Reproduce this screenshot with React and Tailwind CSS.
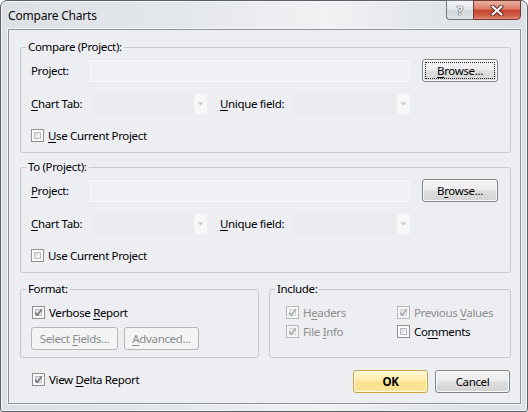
import React from "react";

const FONT = "font-['Noto_Sans','Liberation_Sans',sans-serif]";

function U({ children }) {
  return <span className="underline decoration-1 underline-offset-[2px]">{children}</span>;
}

function Check({ checked, disabled }) {
  return (
    <div
      className={`relative w-[13px] h-[13px] shrink-0 border p-[2px] ${
        disabled ? "border-[#b5b8bb] bg-[#f6f6f6]" : "border-[#8e8f8f] bg-[#fcfcfc]"
      }`}
    >
      <div
        className={`w-full h-full border ${
          disabled
            ? "border-[#d4d6d8] bg-[linear-gradient(135deg,#e4e5e7,#f7f7f7)]"
            : "border-[#b8bcc2] bg-[linear-gradient(135deg,#d6dadf,#f8f9fa)]"
        }`}
      />
      {checked && (
        <svg className="absolute left-[-1px] top-[-1px]" width="13" height="13" viewBox="0 0 13 13">
          <path
            d="M3.2 6.6 L5.4 9.2 L9.8 3.2"
            fill="none"
            stroke={disabled ? "#a9abad" : "#75797d"}
            strokeWidth="1.7"
          />
        </svg>
      )}
    </div>
  );
}

function CheckRow({ checked, disabled, children }) {
  return (
    <div className="flex items-center h-[13px]">
      <Check checked={checked} disabled={disabled} />
      <span className={`ml-[4px] leading-[16px] whitespace-nowrap ${disabled ? "text-[#8d8d8d]" : "text-black"}`}>
        {children}
      </span>
    </div>
  );
}

function Button({ children, w, focused, disabled, primary }) {
  let cls;
  if (disabled) cls = "border-[#b3b7ba] bg-[#f3f4f5] text-[#8a8a8a]";
  else if (primary)
    cls =
      "border-[#c9a43f] bg-[linear-gradient(#fff7d4_0%,#fdeca8_48%,#fbe08a_52%,#fbe59c_100%)] text-black font-bold shadow-[inset_0_0_0_1px_#fffbe8]";
  else
    cls =
      "border-[#7f8488] bg-[linear-gradient(#f3f3f3_0%,#ebebeb_48%,#dedede_52%,#d3d3d3_100%)] text-black shadow-[inset_0_0_0_1px_#fbfbfb]";
  return (
    <div className={`relative h-[23px] ${w} shrink-0 rounded-[3px] border flex items-center justify-center ${cls}`}>
      {focused && <div className="absolute inset-[2px] border border-dotted border-[#222]" />}
      <span className="relative leading-[16px] whitespace-nowrap">{children}</span>
    </div>
  );
}

function TextBox({ w }) {
  return <div className={`h-[22px] ${w} border border-[#fbfbfc] bg-[#eff0f3] shadow-[0_0_0_1px_#e6e8eb]`} />;
}

function Combo({ w }) {
  return (
    <div className={`h-[22px] ${w} flex bg-[#eaebee] border border-[#eceef1]`}>
      <div className="flex-1" />
      <div className="w-[13px] h-full bg-[#f7f7f8] flex items-center justify-center">
        <svg width="7" height="4" viewBox="0 0 7 4">
          <path d="M0.5 0.5 L6.5 0.5 L3.5 3.5 Z" fill="#c3c5c8" />
        </svg>
      </div>
    </div>
  );
}

function Group({ title, className, children }) {
  return (
    <div className={`relative border border-[#c4c9cf] rounded-[3px] ${className}`}>
      <span className="absolute left-[5px] top-[-9px] px-[2px] leading-[16px] bg-[#edeef2] text-black whitespace-nowrap">
        {title}
      </span>
      {children}
    </div>
  );
}

function ProjectGroup({ title, focused, second }) {
  return (
    <Group title={title} className="h-[106px] pl-[10px] pt-[11px]">
      <div className="flex items-center h-[23px]">
        <span className="w-[59px] leading-[16px]">
          {second ? (
            <>
              <U>P</U>roject:
            </>
          ) : (
            <>
              Pro<U>j</U>ect:
            </>
          )}
        </span>
        <TextBox w="w-[320px]" />
        <div className="ml-[12px]">
          <Button w="w-[76px]" focused={focused}>
            {second ? (
              <>
                B<U>r</U>owse...
              </>
            ) : (
              <>
                <U>B</U>rowse...
              </>
            )}
          </Button>
        </div>
      </div>
      <div className="flex items-center h-[22px] mt-[11px]">
        <span className="w-[60px] leading-[16px]">
          <U>C</U>hart Tab:
        </span>
        <Combo w="w-[117px]" />
        <span className="ml-[12px] w-[72px] leading-[16px]">
          <U>U</U>nique field:
        </span>
        <Combo w="w-[119px]" />
      </div>
      <div className="mt-[14px]">
        <CheckRow>
          {second ? (
            <>
              Use Current Pro<U>j</U>ect
            </>
          ) : (
            <>
              <U>U</U>se Current Project
            </>
          )}
        </CheckRow>
      </div>
    </Group>
  );
}

export default function App() {
  return (
    <div className={`${FONT} text-[11.5px] tracking-[-0.35px] text-black w-[528px] h-[412px] overflow-hidden bg-white`}>
      <div className="w-[528px] h-[412px] box-border border border-[#5b6168] rounded-t-[7px] rounded-b-[3px] flex flex-col bg-[linear-gradient(90deg,#dde1e6_0%,#e4e7eb_35%,#f1f2f4_62%,#e3e6ea_80%,#dce0e5_100%)] shadow-[inset_0_0_0_1px_#f2f4f6]">
        <div className="h-[28px] shrink-0 flex items-start">
          <div className="pl-[7px] pt-[7px] leading-[16px] text-[12px] tracking-[-0.2px] text-[#0a0a0a]">Compare Charts</div>
          <div className="ml-auto mr-[6px] -mt-[1px] flex">
            <div className="w-[27px] h-[20px] border border-[#6f767d] border-r-0 rounded-bl-[4px] bg-[linear-gradient(#f4f5f7_0%,#e3e6ea_50%,#d2d6db_51%,#dfe2e6_100%)] flex items-center justify-center">
              <span className="font-bold text-[13px] leading-[14px] text-[#f6f6f6] [text-shadow:0_0_1px_#444,0_0_1px_#444,0_0_1px_#444]">
                ?
              </span>
            </div>
            <div className="w-[48px] h-[20px] border border-[#6f3a30] rounded-br-[4px] bg-[linear-gradient(#eab1a4_0%,#dc7a66_45%,#c8432d_52%,#d3624d_85%,#e3907e_100%)] flex items-center justify-center">
              <svg width="14" height="11" viewBox="0 0 14 11">
                <path d="M2.5 1.5 L11.5 9.5 M11.5 1.5 L2.5 9.5" stroke="#5b2219" strokeWidth="4" strokeLinecap="round" />
                <path d="M2.5 1.5 L11.5 9.5 M11.5 1.5 L2.5 9.5" stroke="#ffffff" strokeWidth="2.2" strokeLinecap="round" />
              </svg>
            </div>
          </div>
        </div>
        <div className="ml-[7px] mr-[6px] h-[375px] shrink-0 border border-[#8b9197] bg-[#edeef2] pl-[11px] pr-[9px] pt-[17px] flex flex-col shadow-[0_0_0_1px_#f5f6f8]">
          <ProjectGroup title="Compare (Project):" focused />
          <div className="mt-[14px]">
            <ProjectGroup title="To (Project):" second />
          </div>
          <div className="mt-[16px] flex">
            <Group title="Format:" className="w-[239px] h-[69px] pl-[11px] pt-[16px]">
              <CheckRow checked>
                Verbose <U>R</U>eport
              </CheckRow>
              <div className="flex mt-[8px] -ml-[1px]">
                <Button w="w-[87px]" disabled>
                  Select <U>F</U>ields...
                </Button>
                <div className="ml-[6px]">
                  <Button w="w-[75px]" disabled>
                    <U>A</U>dvanced...
                  </Button>
                </div>
              </div>
            </Group>
            <Group title="Include:" className="ml-[10px] flex-1 h-[69px] pl-[16px] pt-[16px]">
              <div className="grid grid-cols-[111px_auto] gap-y-[6px]">
                <CheckRow checked disabled>
                  H<U>e</U>aders
                </CheckRow>
                <CheckRow checked disabled>
                  Previous <U>V</U>alues
                </CheckRow>
                <CheckRow checked disabled>
                  File <U>I</U>nfo
                </CheckRow>
                <CheckRow>
                  Co<U>m</U>ments
                </CheckRow>
              </div>
            </Group>
          </div>
          <div className="mt-[12px] flex items-start pr-[1px]">
            <div className="ml-[12px] mt-[3px]">
              <CheckRow checked>
                View <U>D</U>elta Report
              </CheckRow>
            </div>
            <div className="ml-auto flex">
              <Button w="w-[75px]" primary>
                OK
              </Button>
              <div className="ml-[7px]">
                <Button w="w-[75px]">Cancel</Button>
              </div>
            </div>
          </div>
        </div>
      </div>
    </div>
  );
}
